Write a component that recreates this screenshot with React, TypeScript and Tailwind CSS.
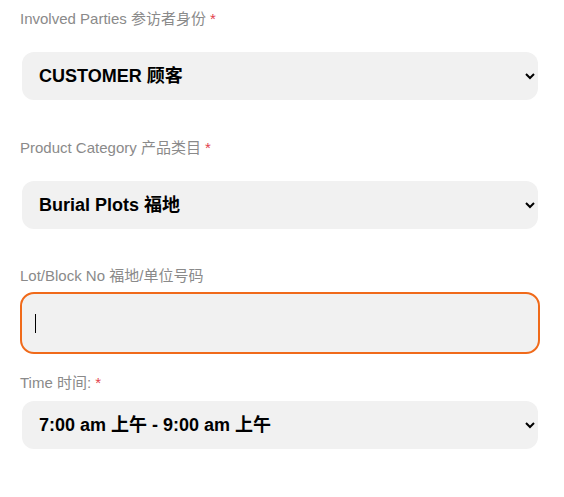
import React from "react";

const font = { fontFamily: '"Liberation Sans", Arial, "Noto Sans CJK SC", sans-serif' };

function Label({ text, req, className }: { text: string; req?: boolean; className?: string }) {
  return (
    <div className={"h-[20px] text-[15px] leading-[20px] text-[#8a8a8a] " + (className ?? "")}>
      {text}
      {req && <span className="text-[#e2414b]"> *</span>}
    </div>
  );
}

function Select({ value, className }: { value: string; className?: string }) {
  return (
    <select
      defaultValue={value}
      className={
        "block ml-[22px] w-[516px] h-[48px] rounded-[12px] bg-[#f1f1f1] pl-[13px] pr-[4px] text-[18px] font-bold text-black outline-none " +
        (className ?? "")
      }
      style={font}
    >
      <option value={value}>{value}</option>
    </select>
  );
}

export default function App() {
  return (
    <div className="w-[564px] h-[497px] bg-white pt-[9px]" style={font}>
      <Label className="ml-[20px]" text="Involved Parties 参访者身份" req />
      <Select className="mt-[23px]" value="CUSTOMER 顾客" />

      <Label className="ml-[20px] mt-[38px]" text="Product Category 产品类目" req />
      <Select className="mt-[23px]" value="Burial Plots 福地" />

      <Label className="ml-[20px] mt-[37px]" text="Lot/Block No 福地/单位号码" />
      <div className="mt-[6px] ml-[20px] w-[520px] h-[62px] rounded-[14px] border-2 border-[#f06a1a] bg-[#f1f1f1] flex items-center pl-[13px]">
        <div className="w-px h-[19px] bg-black" />
      </div>

      <Label className="ml-[20px] mt-[19px]" text="Time 时间:" req />
      <Select className="mt-[8px]" value="7:00 am 上午 - 9:00 am 上午" />
    </div>
  );
}
